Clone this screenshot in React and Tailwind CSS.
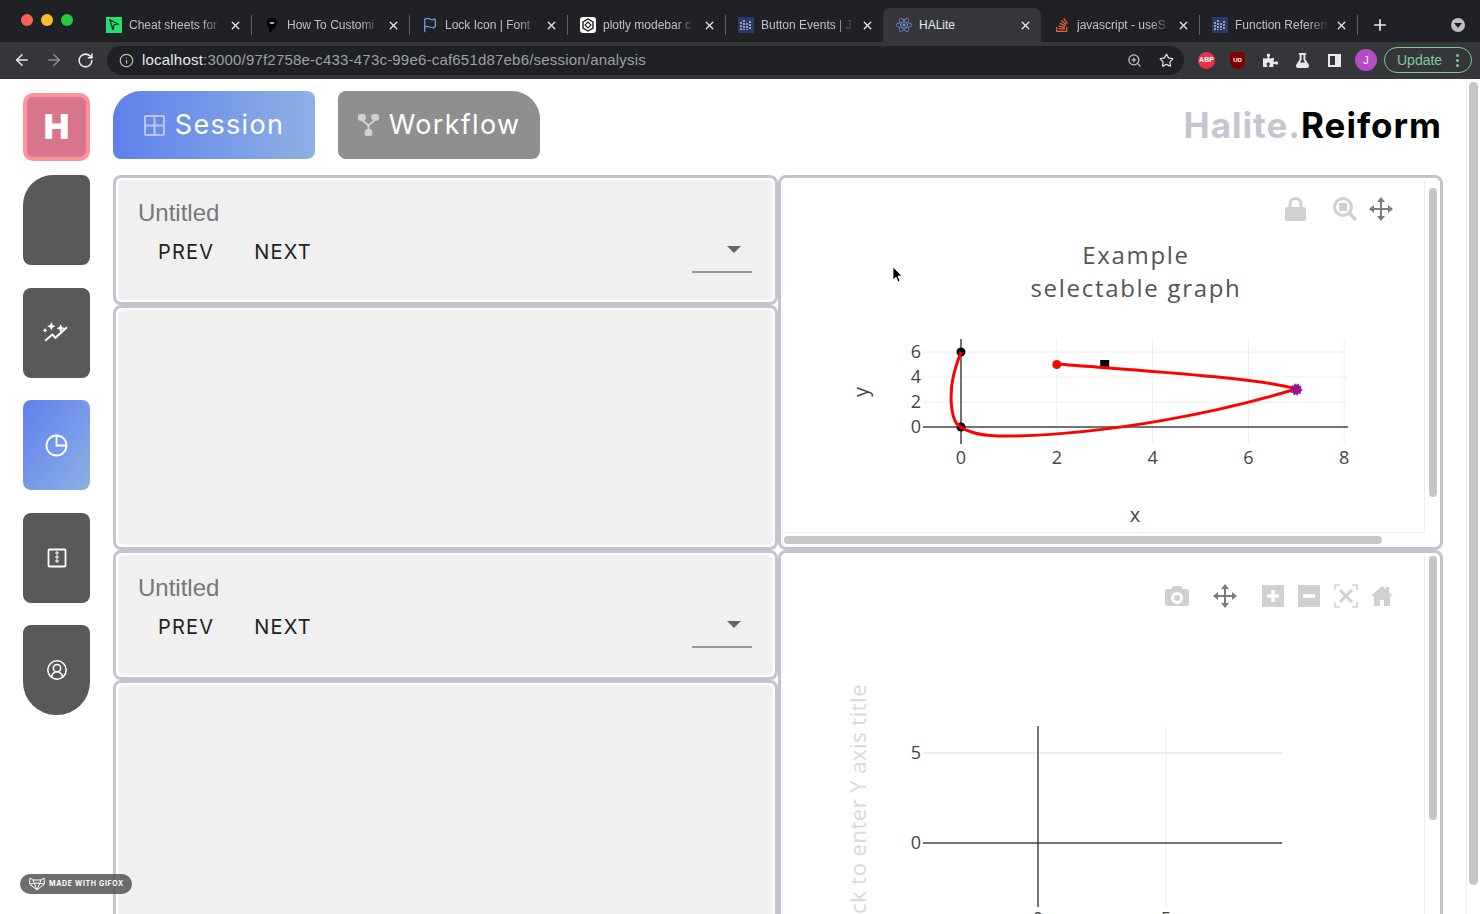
import { ArrowLeft, ArrowRight, RotateCw, Info, ZoomIn, Star, Plus, CircleUserRound, X, Flag } from 'lucide-react';
import { FaReact, FaStackOverflow, FaPuzzlePiece, FaFlask } from 'react-icons/fa';

const SANS = { fontFamily: '"Liberation Sans", Arial, sans-serif' };

function BarsIcon() {
  return (
    <svg width="16" height="16" viewBox="0 0 16 16">
      <rect width="16" height="16" fill="#2b3a67" />
      <path d="M3 5v8M6 3v10M9 6v7M12 4v9" stroke="#dfe6f5" strokeWidth="1.2" strokeDasharray="2 1" />
    </svg>
  );
}

const TABS = [
  {
    title: 'Cheat sheets for',
    icon: (
      <svg width="16" height="16" viewBox="0 0 16 16">
        <rect width="16" height="16" fill="#25e06a" />
        <path d="M4 3l3 10 1-5 4-1z" fill="none" stroke="#123" strokeWidth="1.2" />
      </svg>
    ),
  },
  {
    title: 'How To Customi',
    icon: (
      <svg width="16" height="16" viewBox="0 0 16 16">
        <path d="M8 1c3.5 0 5 2.2 5 5 0 2-1 3.2-2 4v2H8v3H5v-4C3.800 10 3 8 3 6c0-3 2-5 5-5z" fill="#000" />
        <path d="M6 5l1 2 1-2 1 2 1-2" stroke="#fff" strokeWidth="0.8" fill="none" />
      </svg>
    ),
  },
  { title: 'Lock Icon | Font', icon: <Flag size={16} color="#6d94de" strokeWidth={2} /> },
  {
    title: 'plotly modebar c',
    icon: (
      <svg width="16" height="16" viewBox="0 0 16 16">
        <rect width="16" height="16" rx="3" fill="#fff" />
        <path d="M8 2l5 3v6l-5 3-5-3V5z" fill="none" stroke="#222" strokeWidth="1.4" />
        <path d="M8 5l3 3-3 3-3-3z" fill="none" stroke="#222" strokeWidth="1.1" />
      </svg>
    ),
  },
  { title: 'Button Events | J', icon: <BarsIcon /> },
  { title: 'HALite', active: true, icon: <FaReact size={16} color="#6d8fd8" /> },
  { title: 'javascript - useS', icon: <FaStackOverflow size={16} color="#e8622a" /> },
  { title: 'Function Referen', icon: <BarsIcon /> },
];

function Tab({ tab }) {
  return (
    <div
      className={`relative flex h-[34px] w-[158px] shrink-0 items-center pl-[13px] pr-[9px] ${
        tab.active ? 'rounded-t-lg bg-[#35363a]' : ''
      }`}
    >
      <span className="flex h-4 w-4 shrink-0 items-center justify-center">{tab.icon}</span>
      <span
        className={`ml-[7px] w-[94px] overflow-hidden whitespace-nowrap text-[12px] ${
          tab.active ? 'text-[#e8eaed]' : 'text-[#bdc1c6]'
        } ${tab.active ? '' : '[mask-image:linear-gradient(to_right,black_78%,transparent)]'}`}
      >
        {tab.title}
      </span>
      <X size={13} strokeWidth={2.4} color="#e8eaed" className="ml-auto" />
      {!tab.active && <span className="absolute right-[-1px] top-[7px] h-5 w-px bg-[#5f6368]" />}
    </div>
  );
}

function BrowserChrome() {
  return (
    <header className="shrink-0 bg-[#202124]" style={SANS}>
      <div className="flex h-[42px] items-end">
        <div className="flex h-[42px] w-[93px] shrink-0 items-center gap-2 pb-[2px] pl-[21px]">
          <span className="h-3 w-3 rounded-full bg-[#fb5f57]" />
          <span className="h-3 w-3 rounded-full bg-[#fbbc2e]" />
          <span className="h-3 w-3 rounded-full bg-[#28c840]" />
        </div>
        {TABS.map((tab) => (
          <Tab key={tab.title} tab={tab} />
        ))}
        <div className="flex h-[34px] flex-1 items-center pb-[1px]">
          <Plus size={18} strokeWidth={2.2} color="#e8eaed" className="ml-[14px]" />
          <span className="ml-[62px] flex h-[14px] w-[14px] items-center justify-center rounded-full bg-[#bdc1c6]">
            <span className="mt-[2px] border-x-[4px] border-t-[5px] border-x-transparent border-t-[#202124]" />
          </span>
        </div>
      </div>
      <div className="flex h-[37px] items-center bg-[#35363a] pb-px">
        <div className="flex w-[107px] shrink-0 items-center gap-[14px] pl-[13px]">
          <ArrowLeft size={18} color="#e8eaed" />
          <ArrowRight size={18} color="#8b8e93" />
          <RotateCw size={17} color="#e8eaed" strokeWidth={2.2} />
        </div>
        <div className="flex h-[29px] w-[1077px] shrink-0 items-center rounded-full bg-[#202124] pl-[12px] pr-[10px]">
          <Info size={15} color="#bdc1c6" />
          <span className="ml-2 text-[15px] tracking-[0.2px] text-[#9aa0a6]">
            <span className="text-[#e8eaed]">localhost</span>:3000/97f2758e-c433-473c-99e6-caf651d87eb6/session/analysis
          </span>
          <ZoomIn size={15} color="#bdc1c6" className="ml-auto" />
          <Star size={15} color="#dadce0" className="ml-[17px]" />
        </div>
        <div className="flex flex-1 items-center pl-[14px]">
          <span className="flex h-[17px] w-[17px] items-center justify-center rounded-full bg-[#e9324a] text-[7px] font-bold text-white">
            ABP
          </span>
          <span className="ml-[15px] flex h-[17px] w-[15px] items-center justify-center rounded-b-lg rounded-t-sm bg-[#800000] text-[6px] font-bold text-white">
            UD
          </span>
          <FaPuzzlePiece size={15} color="#e8eaed" className="ml-[18px]" />
          <FaFlask size={15} color="#e8eaed" className="ml-[17px]" />
          <span className="ml-[18px] h-[13px] w-[13px] border-2 border-r-[6px] border-[#e8eaed]" />
          <span className="ml-[14px] flex h-[22px] w-[22px] items-center justify-center rounded-full bg-[#b34fc4] text-[11px] text-white">
            J
          </span>
          <div className="ml-[7px] flex h-[26px] w-[88px] items-center rounded-full border border-[#81c995] pl-3 text-[14px] text-[#81c995]">
            Update
            <span className="ml-[14px] flex flex-col gap-[2px]">
              <span className="h-[3px] w-[3px] rounded-full bg-[#81c995]" />
              <span className="h-[3px] w-[3px] rounded-full bg-[#81c995]" />
              <span className="h-[3px] w-[3px] rounded-full bg-[#81c995]" />
            </span>
          </div>
        </div>
      </div>
    </header>
  );
}

function SparkLine() {
  return (
    <svg width="27" height="21" viewBox="0 0 26 20" fill="none" stroke="#fff" strokeWidth="2">
      <path d="M2 18l7-6 3 3 11-10" />
      <path d="M8 0l1.300 2.700L12 4 9.300 5.300 8 8 6.700 5.300 4 4l2.700-1.300zM2 6l.9 1.100L4 8l-1.100.9L2 10l-.9-1.100L0 8l1.100-.9zM17 2l1.200 2.800L21 6l-2.800 1.200L17 10l-1.200-2.800L13 6l2.800-1.200z" fill="#fff" stroke="none" />
    </svg>
  );
}

function PieIcon() {
  return (
    <svg width="23" height="23" viewBox="0 0 23 23" fill="none" stroke="#fff" strokeWidth="1.800">
      <circle cx="11.500" cy="11.500" r="10" />
      <path d="M11.500 1.500v10h10" />
    </svg>
  );
}

function ZipIcon() {
  return (
    <svg width="20" height="20" viewBox="0 0 20 20" fill="none" stroke="#fff" strokeWidth="1.800">
      <rect x="1.500" y="1.500" width="17" height="17" rx="1" />
      <path d="M9 4h2v2H9zM9 8h2v2H9zM9 12h2v2H9z" strokeWidth="1" />
    </svg>
  );
}

function SideNav() {
  const base = 'flex h-[90px] w-[67px] items-center justify-center';
  return (
    <nav className="flex w-[113px] shrink-0 flex-col items-center pt-[14px]">
      <div className="flex h-[68px] w-[67px] items-center justify-center rounded-[10px] border-[4px] border-[#fd9398] bg-[#d7768a] pb-[2px] text-[34px] font-black text-white" style={{ fontFamily: 'Inter, sans-serif' }}>
        H
      </div>
      <div className="mt-[14px] flex flex-col gap-[22.500px]">
        <div className={`${base} rounded-[8px] rounded-tl-[30px] bg-[#58595b]`} />
        <div className={`${base} rounded-[8px] bg-[#58595b]`}>
          <SparkLine />
        </div>
        <div className={`${base} rounded-[8px] bg-gradient-to-br from-[#5f7fec] to-[#8db0e4]`}>
          <PieIcon />
        </div>
        <div className={`${base} rounded-[8px] bg-[#58595b]`}>
          <ZipIcon />
        </div>
        <div className={`${base} rounded-t-[8px] rounded-b-[33px] bg-[#58595b]`}>
          <CircleUserRound size={22} color="#fff" strokeWidth={1.700} />
        </div>
      </div>
    </nav>
  );
}

function GridIcon() {
  return (
    <svg width="21" height="21" viewBox="0 0 21 21" fill="none" stroke="#b9c6ea" strokeWidth="2">
      <rect x="1" y="1" width="19" height="19" rx="1" />
      <path d="M10.500 1v19M1 10.500h19" />
    </svg>
  );
}

function WorkflowIcon() {
  return (
    <svg width="21" height="22" viewBox="0 0 22 23" fill="#d2d2d2" stroke="#d2d2d2">
      <rect x="0.500" y="0.500" width="7" height="6" rx="1.500" />
      <rect x="14.500" y="0.500" width="7" height="6" rx="1.500" />
      <rect x="7.500" y="16.500" width="7" height="6" rx="1.500" />
      <path d="M4 6l7 6 7-6M11 12v5" fill="none" strokeWidth="2" />
    </svg>
  );
}

function TopBar() {
  const btn = 'flex h-[68px] w-[202px] items-center justify-center gap-[10px] text-[27px] tracking-[1.300px] text-white';
  return (
    <div className="flex h-[96px] shrink-0 items-start pr-[24px] pt-[12px]" style={{ fontFamily: 'Inter, sans-serif' }}>
      <button className={`${btn} rounded-[8px] rounded-tl-[28px] bg-gradient-to-r from-[#5f80ec] to-[#8eb0e3]`}>
        <GridIcon />
        Session
      </button>
      <button className={`${btn} ml-[23px] rounded-[8px] rounded-tr-[28px] bg-[#8f8f8f]`}>
        <WorkflowIcon />
        Workflow
      </button>
      <div className="ml-auto mt-[11px] text-[35px] font-bold leading-[46px] tracking-[1px]">
        <span className="text-[#c6c6d1]">Halite.</span>
        <span className="text-black">Reiform</span>
      </div>
    </div>
  );
}

function Selector() {
  return (
    <div className="h-full rounded-lg border-[3px] border-[#c4c4d0] bg-white p-[2px]">
      <div className="relative h-full rounded-md bg-[#f0f0f0] pl-[20px] pt-[17px]">
        <div className="text-[24px] leading-[32px] text-[#777]" style={SANS}>
          Untitled
        </div>
        <div className="mt-[9px] flex gap-[40px] pl-[20px] text-[20px] leading-[28px] tracking-[1.200px] text-[#222]" style={{ fontFamily: 'Inter, sans-serif' }}>
          <span>PREV</span>
          <span>NEXT</span>
        </div>
        <div className="absolute right-[21px] top-[63px] h-[30px] w-[60px] border-b-2 border-[#999]">
          <span className="absolute right-[11px] top-[3px] border-x-[7px] border-t-[7px] border-x-transparent border-t-[#666]" />
        </div>
      </div>
    </div>
  );
}

function EmptyPanel() {
  return (
    <div className="h-full rounded-lg border-[3px] border-[#c4c4d0] bg-white p-[2px]">
      <div className="h-full rounded-md bg-[#f0f0f0]" />
    </div>
  );
}

const ICON_LIGHT = '#d0d0d0';
const ICON_DARK = '#7b7b7b';

function MoveIcon() {
  return (
    <svg width="24" height="24" viewBox="0 0 24 24" fill={ICON_DARK}>
      <path d="M12 0l4 5h-3v6h6V8l5 4-5 4v-3h-6v6h3l-4 5-4-5h3v-6H5v3l-5-4 5-4v3h6V5H8z" />
    </svg>
  );
}

function LockIcon() {
  return (
    <svg width="21" height="24" viewBox="0 0 21 24">
      <path d="M5 11V7a5.500 5.500 0 0 1 11 0v4" fill="none" stroke={ICON_LIGHT} strokeWidth="3" />
      <rect x="0" y="10" width="21" height="14" rx="2" fill={ICON_LIGHT} />
    </svg>
  );
}

function ZoomBoxIcon() {
  return (
    <svg width="24" height="24" viewBox="0 0 24 24" fill="none" stroke={ICON_LIGHT}>
      <circle cx="10" cy="10" r="8.500" strokeWidth="3" />
      <rect x="6" y="6" width="8" height="8" fill={ICON_LIGHT} stroke="none" />
      <path d="M16 16l7 7" strokeWidth="3.500" />
    </svg>
  );
}

function CameraIcon() {
  return (
    <svg width="24" height="20" viewBox="0 0 24 20">
      <path fillRule="evenodd" d="M2 3h4l2-3h8l2 3h4a2 2 0 0 1 2 2v13a2 2 0 0 1-2 2H2a2 2 0 0 1-2-2V5a2 2 0 0 1 2-2zm10 3a6 6 0 1 0 0 12 6 6 0 0 0 0-12zm0 3a3 3 0 1 1 0 6 3 3 0 0 1 0-6z" fill={ICON_LIGHT} />
    </svg>
  );
}

function SquareIcon({ plus }) {
  return (
    <svg width="22" height="22" viewBox="0 0 22 22">
      <rect width="22" height="22" fill={ICON_LIGHT} />
      <path d={plus ? 'M5 11h12M11 5v12' : 'M5 11h12'} stroke="#fff" strokeWidth="3.500" />
    </svg>
  );
}

function AutoscaleIcon() {
  return (
    <svg width="24" height="24" viewBox="0 0 24 24" fill="none" stroke={ICON_LIGHT} strokeWidth="1.500">
      <path d="M1 6V1h5M18 1h5v5M23 18v5h-5M6 23H1v-5" />
      <path d="M6 6l12 12M18 6L6 18" strokeWidth="3" />
    </svg>
  );
}

function HomeIcon() {
  return (
    <svg width="22" height="20" viewBox="0 0 22 20" fill={ICON_LIGHT}>
      <path d="M11 0L0 10h3v10h6v-6h4v6h6V10h3l-4-3.600V1h-3v2.700z" />
    </svg>
  );
}

function CurveChart() {
  const X = (v) => 180 + v * 47.9;
  const Y = (v) => 247 - v * 12.5;
  return (
    <svg width="644" height="352" className="block" style={{ fontFamily: '"Open Sans", sans-serif' }}>
      <text x="355" y="84" textAnchor="middle" fontSize="24" letterSpacing="1.700" fill="#555">Example</text>
      <text x="355" y="117" textAnchor="middle" fontSize="24" letterSpacing="1.700" fill="#555">selectable graph</text>
      {[2, 4, 6, 8].map((v) => (
        <line key={v} x1={X(v)} x2={X(v)} y1="159" y2="264" stroke="#eee" />
      ))}
      {[2, 4, 6].map((v) => (
        <line key={v} x1="142" x2="567" y1={Y(v)} y2={Y(v)} stroke="#eee" />
      ))}
      <line x1="142" x2="567" y1="247" y2="247" stroke="#444" strokeWidth="1.500" />
      <line x1="180" x2="180" y1="159" y2="264" stroke="#444" strokeWidth="1.500" />
      {[0, 2, 4, 6].map((v) => (
        <text key={v} x="140" y={Y(v) + 6} textAnchor="end" fontSize="18" fill="#444">{v}</text>
      ))}
      {[0, 2, 4, 6, 8].map((v) => (
        <text key={v} x={X(v)} y="284" textAnchor="middle" fontSize="18" fill="#444">{v}</text>
      ))}
      <text x="354" y="342" textAnchor="middle" fontSize="20" fill="#444">x</text>
      <text transform="translate(87 212) rotate(-90)" textAnchor="middle" fontSize="20" fill="#444">y</text>
      <circle cx={X(0)} cy={Y(6)} r="4.500" fill="#000" />
      <circle cx={X(0)} cy={Y(0)} r="4.500" fill="#000" />
      <rect x={X(3) - 4.500} y={Y(5) - 4.500} width="9" height="8" fill="#000" />
      <path
        d="M276 184 C352 190 482 198 515 209 C440 232 330 254 231 256 C205 256.500 186 254 176 244 C169 235 169 212 172 198 C174 188 177 180 180 172"
        fill="none"
        stroke="#f00"
        strokeWidth="3"
      />
      <circle cx={X(2)} cy={Y(5)} r="4.500" fill="#f00" />
      <circle cx={X(7)} cy={Y(3)} r="5" fill="#7b1fa2" stroke="#8e24aa" strokeDasharray="1.500 1.500" strokeWidth="2" />
      <circle cx={X(7)} cy={Y(3)} r="2" fill="#f00" />
    </svg>
  );
}

function EmptyChart() {
  return (
    <svg width="644" height="420" className="block" style={{ fontFamily: '"Open Sans", sans-serif' }}>
      <line x1="385" x2="385" y1="171" y2="352" stroke="#eee" />
      <line x1="142" x2="501" y1="198" y2="198" stroke="#eee" strokeWidth="2" />
      <line x1="142" x2="501" y1="288" y2="288" stroke="#444" strokeWidth="1.500" />
      <line x1="257" x2="257" y1="171" y2="352" stroke="#444" strokeWidth="1.500" />
      <text x="140" y="204" textAnchor="end" fontSize="18" fill="#444">5</text>
      <text x="140" y="294" textAnchor="end" fontSize="18" fill="#444">0</text>
      <text x="257" y="370" textAnchor="middle" fontSize="18" fill="#444">0</text>
      <text x="385" y="370" textAnchor="middle" fontSize="18" fill="#444">5</text>
      <text transform="translate(85 129) rotate(-90)" textAnchor="end" fontSize="22" letterSpacing="0.500" fill="#d9d9d9">Click to enter Y axis title</text>
    </svg>
  );
}

function ChartPanel({ modebar, children, bottomBar }) {
  return (
    <div className="relative h-full overflow-hidden rounded-lg border-[3px] border-[#c4c4d0] bg-white pt-[2px]">
      <div className={`relative overflow-hidden border-r border-[#eee] ${bottomBar ? 'h-[353px] w-[644px] border-b' : 'h-[420px] w-[644px]'}`}>
        {children}
        <div className={`absolute right-[31px] flex h-[24px] items-center ${bottomBar ? 'top-[17px]' : 'top-[29px]'}`}>{modebar}</div>
      </div>
      {bottomBar && <div className="ml-[3px] mt-[3px] h-[8px] w-[598px] rounded-[4px] bg-[#c6c6c6]" />}
      <div className={`absolute right-[3px] w-[8px] rounded-[4px] bg-[#c6c6c6] ${bottomBar ? 'top-[10px] h-[309px]' : 'top-[3px] h-[264px]'}`} />
    </div>
  );
}

function Gifox() {
  return (
    <div className="absolute left-[20px] top-[874px] flex h-[20px] w-[112px] items-center gap-[4px] rounded-full bg-[#555]/85 pl-[9px] text-[7px] font-bold tracking-[0.650px] text-white" style={{ fontFamily: 'Inter, sans-serif' }}>
      <svg width="16" height="14" viewBox="0 0 16 14" fill="none" stroke="#fff" strokeWidth="1">
        <path d="M1 1l3 2h8l3-2 .5 6L8 13 .5 7zM4 3l4 10 4-10M1 7l7-1 7 1" />
      </svg>
      MADE WITH GIFOX
    </div>
  );
}

function Cursor() {
  return (
    <svg className="absolute left-[892px] top-[266px]" width="11" height="18" viewBox="0 0 11 18">
      <path d="M1 1v13l3-3 2 5 2-1-2-5h4z" fill="#000" stroke="#fff" strokeWidth="0.800" />
    </svg>
  );
}

export default function App() {
  return (
    <div className="relative flex h-[914px] w-[1480px] flex-col overflow-hidden bg-white">
      <BrowserChrome />
      <div className="flex min-h-0 flex-1">
        <SideNav />
        <main className="flex min-w-0 flex-1 flex-col">
          <TopBar />
          <div className="grid w-[1330px] shrink-0 grid-cols-2 grid-rows-[130px_245px_130px_300px]">
            <Selector />
            <div className="row-span-2">
              <ChartPanel
                bottomBar
                modebar={
                  <div className="flex items-center">
                    <LockIcon />
                    <span className="ml-[27px]"><ZoomBoxIcon /></span>
                    <span className="ml-[12px]"><MoveIcon /></span>
                  </div>
                }
              >
                <CurveChart />
              </ChartPanel>
            </div>
            <EmptyPanel />
            <Selector />
            <div className="row-span-2">
              <ChartPanel
                modebar={
                  <div className="flex items-center">
                    <CameraIcon />
                    <span className="ml-[24px]"><MoveIcon /></span>
                    <span className="ml-[25px]"><SquareIcon plus /></span>
                    <span className="ml-[14px]"><SquareIcon /></span>
                    <span className="ml-[14px]"><AutoscaleIcon /></span>
                    <span className="ml-[13px]"><HomeIcon /></span>
                  </div>
                }
              >
                <EmptyChart />
              </ChartPanel>
            </div>
            <EmptyPanel />
          </div>
        </main>
        <div className="flex w-[14px] shrink-0 justify-center border-l border-[#eee] pt-[3px]">
          <span className="h-[803px] w-[9px] rounded-full bg-[#c6c6c6]" />
        </div>
      </div>
      <Gifox />
      <Cursor />
    </div>
  );
}
